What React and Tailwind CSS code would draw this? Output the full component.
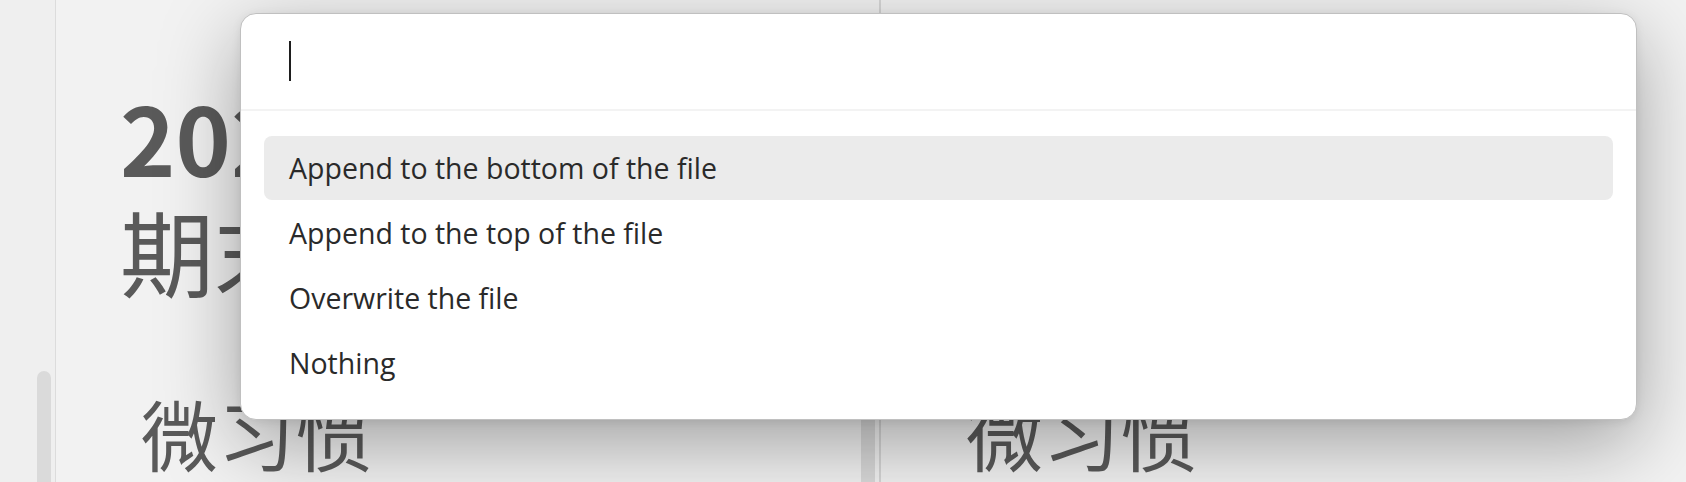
const OPTIONS = [
  'Append to the bottom of the file',
  'Append to the top of the file',
  'Overwrite the file',
  'Nothing',
];

function NotePane({ showTitle, scrollbar }) {
  return (
    <div className="relative flex-1 h-full bg-[#f2f2f2] overflow-hidden">
      <div className="pt-[79px] text-[#5a5a5a] whitespace-nowrap" style={{ fontFamily: '"Noto Sans CJK SC", "Noto Sans", sans-serif' }}>
        <div className={(showTitle ? '' : 'invisible ') + 'pl-[64px] text-[94px] leading-[114px]'}>
          <div className="font-bold">2024年度</div>
          <div>期末复盘</div>
        </div>
        <div className="pl-[85px] mt-[78px] text-[77px] leading-[96px]">微习惯</div>
      </div>
      {scrollbar && (
        <div className="absolute right-[4px] top-[300px] bottom-0 w-[14px] rounded-t-full bg-[#d9d9d9]" />
      )}
    </div>
  );
}

export default function App() {
  return (
    <div className="relative w-[1686px] h-[482px] overflow-hidden bg-[#efefef] flex">
      {/* left sidebar strip */}
      <div className="relative w-[56px] h-full bg-[#efefef] border-r border-[#dcdcdc]">
        <div className="absolute right-[4px] top-[371px] bottom-0 w-[14px] rounded-t-full bg-[#dadada]" />
      </div>
      <div className="w-[823px] h-full flex">
        <NotePane showTitle scrollbar />
      </div>
      <div className="w-[2px] h-full bg-[#d6d6d6]" />
      <div className="flex-1 h-full flex">
        <NotePane showTitle={false} />
      </div>

      {/* command modal */}
      <div
        className="absolute left-[240px] top-[13px] w-[1397px] h-[407px] bg-white rounded-[16px] border border-[#c0c0c0] shadow-[0_24px_80px_rgba(0,0,0,0.34),0_2px_10px_rgba(0,0,0,0.08)] flex flex-col"
        style={{ fontFamily: '"Open Sans", "Noto Sans", sans-serif' }}
      >
        <div className="h-[97px] shrink-0 flex items-center pl-[48px] pb-[1px] border-b-2 border-[#f3f3f3]">
          <div className="w-[2px] h-[40px] bg-[#1e1e1e]" />
        </div>
        <div className="flex flex-col gap-[1px] px-[23px] pt-[25px]">
          {OPTIONS.map((label, i) => (
            <div
              key={label}
              className={
                'h-[64px] flex items-center pl-[25px] rounded-[8px] text-[28.5px] text-[#2a2a2a] ' +
                (i === 0 ? 'bg-[#ebebeb]' : '')
              }
            >
              {label}
            </div>
          ))}
        </div>
      </div>
    </div>
  );
}
